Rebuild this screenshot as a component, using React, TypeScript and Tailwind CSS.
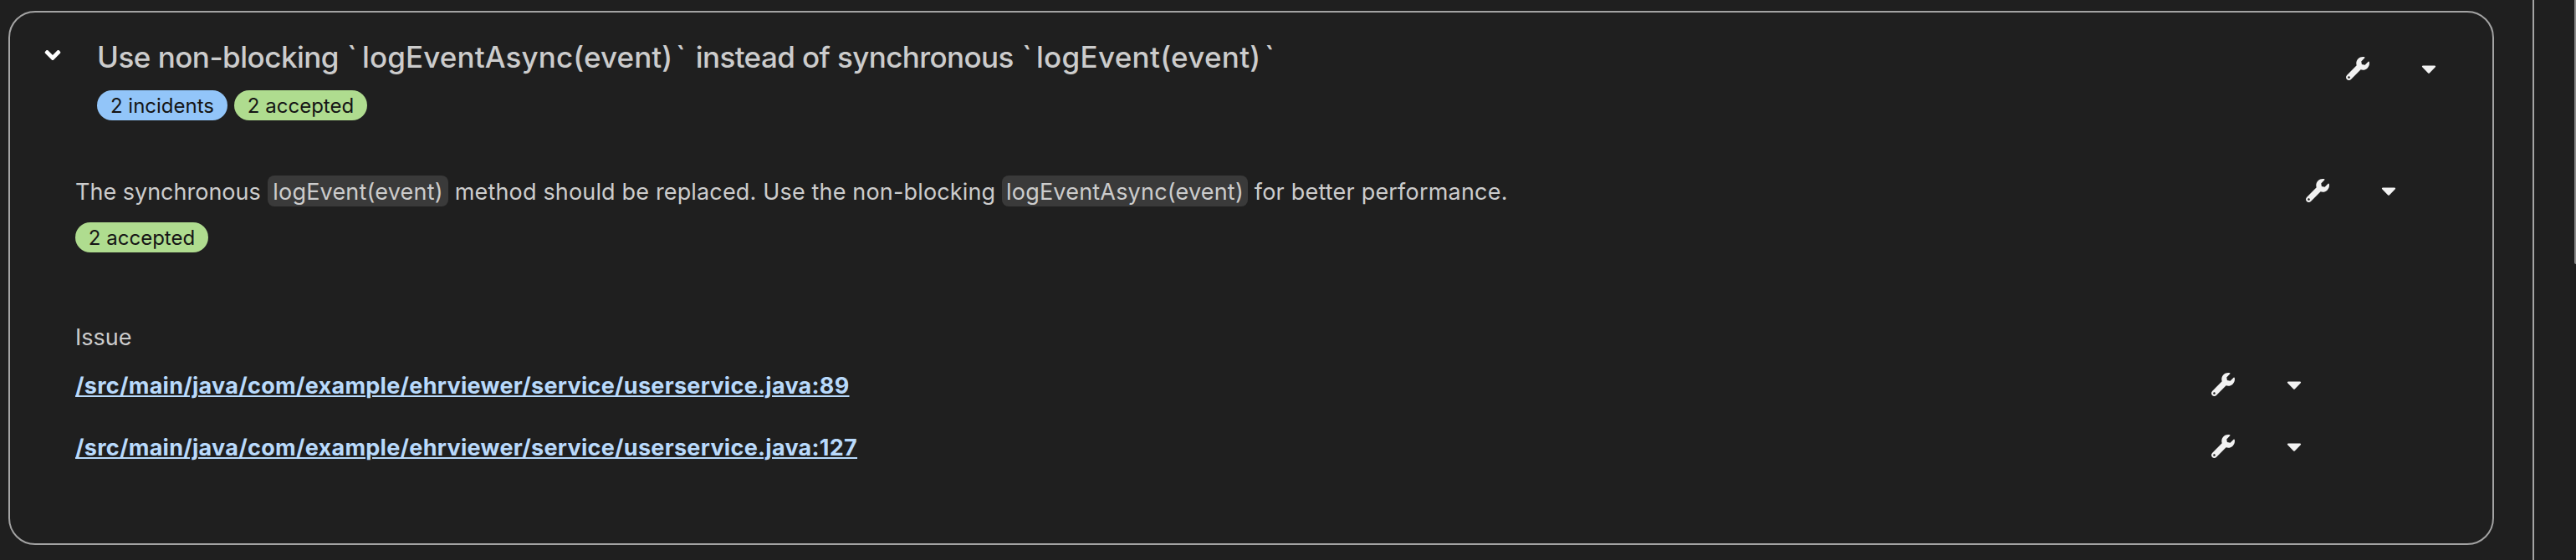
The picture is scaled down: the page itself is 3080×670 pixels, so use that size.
import type { ReactNode } from "react";
import { FaAngleDown, FaCaretDown, FaWrench } from "react-icons/fa";

function Actions({ className }: { className: string }) {
  return (
    <div className={`flex h-7 shrink-0 items-center text-[#f2f2f2] ${className}`}>
      <button type="button" aria-label="Get solution" className="flex size-7 items-center justify-center">
        <FaWrench size={28} />
      </button>
      <button type="button" aria-label="More options" className="ml-[57px] flex size-7 items-center justify-center">
        <FaCaretDown size={28} />
      </button>
    </div>
  );
}

function Badge({ color, width, children }: { color: string; width: string; children: ReactNode }) {
  return (
    <span className={`flex h-9 items-center justify-center rounded-full text-[24px] leading-[37px] text-[#151515] ${color} ${width}`}>
      {children}
    </span>
  );
}

function Code({ width, children }: { width: string; children: ReactNode }) {
  return (
    <code
      className={`block h-[37px] rounded-lg bg-[#3a3a3a] text-center font-['Inter',sans-serif] leading-[39px] tracking-[0.2px] ${width}`}
    >
      {children}
    </code>
  );
}

const incidents = [
  "/src/main/java/com/example/ehrviewer/service/userservice.java:89",
  "/src/main/java/com/example/ehrviewer/service/userservice.java:127",
];

export default function App() {
  return (
    <div className="flex h-[670px] w-[3080px] overflow-hidden bg-[#1f1f1f] font-['Inter',sans-serif] text-[27px] text-[#cccccc]">
      <div className="w-[3030px] shrink-0 border-r-2 border-[#a3a3a3] pt-[13px] pl-[10px]">
        <section className="h-[639px] w-[2972px] rounded-[32px] border-2 border-[#a3a3a3]">
          <header className="flex h-[129px] items-start">
            <button type="button" aria-label="Collapse" className="mt-[36px] ml-[36px] flex h-[30px] w-[30px] items-center justify-center text-white">
              <FaAngleDown size={30} />
            </button>
            <div className="ml-[38px] grow pt-[31px]">
              <h2 className="flex h-[62px] whitespace-pre text-[35px] leading-[45px] font-medium">
                <span className="w-[299px] tracking-[-0.5px]">Use non-blocking </span>
                <span className="w-[18px]">`</span>
                <span className="w-[375px] tracking-[0.12px]">logEventAsync(event)</span>
                <span className="w-[15px]">`</span>
                <span className="w-[399px] tracking-[-0.6px]"> instead of synchronous </span>
                <span className="w-[17px]">`</span>
                <span className="w-[273px] tracking-[0.3px]">logEvent(event)</span>
                <span>`</span>
              </h2>
              <div className="flex gap-2">
                <Badge color="bg-[#92c5f9]" width="w-[156px]">2 incidents</Badge>
                <Badge color="bg-[#afdc8f]" width="w-[159px]">2 accepted</Badge>
              </div>
            </div>
            <Actions className="mt-[53px] mr-[62px]" />
          </header>

          <div className="flex items-start pt-[66px] pl-[78px]">
            <div className="grow">
              <p className="flex h-[37px] whitespace-pre leading-[39px]">
                <span className="w-[230px]">The synchronous </span>
                <Code width="w-[216px]">logEvent(event)</Code>
                <span className="w-[662px] tracking-[0.16px]"> method should be replaced. Use the non-blocking </span>
                <Code width="w-[294px]">logEventAsync(event)</Code>
                <span className="tracking-[0.2px]"> for better performance.</span>
              </p>
              <div className="mt-[19px] flex">
                <Badge color="bg-[#afdc8f]" width="w-[159px]">2 accepted</Badge>
              </div>
            </div>
            <Actions className="mt-[4px] mr-[110px]" />
          </div>

          <div className="mt-[83px] pl-[78px]">
            <h3 className="h-[38px] leading-[37px]">Issue</h3>
            <ul className="mt-[18px]">
              {incidents.map((path) => (
                <li key={path} className="flex h-[74px] items-start">
                  <a
                    href="#"
                    className="grow leading-[41px] font-bold tracking-[0.28px] whitespace-nowrap text-[#b9dafc] underline decoration-2 underline-offset-[2px]"
                  >
                    {path}
                  </a>
                  <Actions className="mt-[5px] mr-[223px]" />
                </li>
              ))}
            </ul>
          </div>
        </section>
      </div>
      <div className="flex grow justify-end">
        <div className="h-[316px] w-[2px] rounded-bl-sm bg-[#8a8a8a]" />
      </div>
    </div>
  );
}
